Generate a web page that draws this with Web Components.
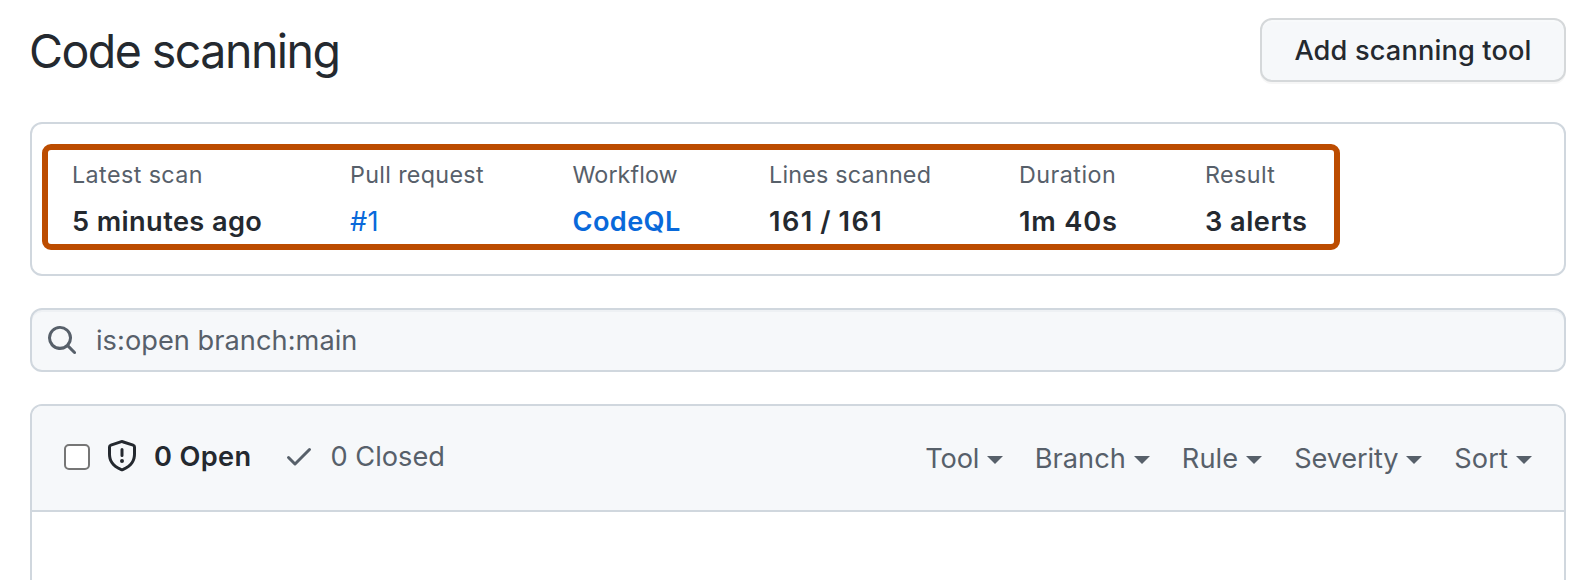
<!DOCTYPE html>
<html lang="en">
<head>
<meta charset="utf-8">
<title>Code scanning</title>
<style>
  html, body { margin: 0; height: 100%; background: #fff; overflow: hidden; }
  body { font-family: Inter, "Liberation Sans", sans-serif; color: #24292f; }
</style>
</head>
<body>
<scanning-page></scanning-page>

<script>
const define = (name, markup) => {
  const template = document.createElement('template');
  template.innerHTML = markup;
  customElements.define(name, class extends HTMLElement {
    constructor() {
      super();
      this.attachShadow({ mode: 'open' }).append(template.content.cloneNode(true));
    }
  });
};

define('octo-icon-search', `
  <style>:host { display: block; width: 32px; height: 32px; } svg { display: block; width: 100%; height: 100%; fill: currentColor; }</style>
  <svg viewBox="0 0 16 16" aria-hidden="true"><path d="M10.68 11.74a6 6 0 0 1-7.922-8.982 6 6 0 0 1 8.982 7.922l3.04 3.04a.749.749 0 0 1-.326 1.275.749.749 0 0 1-.734-.215ZM11.5 7a4.499 4.499 0 1 0-8.997 0A4.499 4.499 0 0 0 11.5 7Z"/></svg>`);

define('octo-icon-shield', `
  <style>:host { display: block; width: 32px; height: 32px; } svg { display: block; width: 100%; height: 100%; fill: currentColor; }</style>
  <svg viewBox="0 0 16 16" aria-hidden="true"><path d="M7.467.133a1.748 1.748 0 0 1 1.066 0l5.25 1.68A1.75 1.75 0 0 1 15 3.48V7c0 1.566-.32 3.182-1.303 4.682-.983 1.498-2.585 2.813-5.032 3.855a1.697 1.697 0 0 1-1.33 0c-2.447-1.042-4.049-2.357-5.032-3.855C1.32 10.182 1 8.566 1 7V3.48a1.755 1.755 0 0 1 1.217-1.667Zm.61 1.429a.25.25 0 0 0-.153 0l-5.25 1.68a.25.25 0 0 0-.174.238V7c0 1.358.275 2.666 1.057 3.86.784 1.194 2.121 2.34 4.366 3.297a.196.196 0 0 0 .154 0c2.245-.956 3.582-2.104 4.366-3.298C13.225 9.666 13.5 8.36 13.5 7V3.48a.251.251 0 0 0-.174-.237l-5.25-1.68ZM8.75 4.75v3a.75.75 0 0 1-1.5 0v-3a.75.75 0 0 1 1.5 0ZM9 10.5a1 1 0 1 1-2 0 1 1 0 0 1 2 0Z"/></svg>`);

define('octo-icon-check', `
  <style>:host { display: block; width: 32px; height: 32px; } svg { display: block; width: 100%; height: 100%; fill: currentColor; }</style>
  <svg viewBox="0 0 16 16" aria-hidden="true"><path d="M13.78 4.22a.75.75 0 0 1 0 1.06l-7.25 7.25a.75.75 0 0 1-1.06 0L2.22 9.28a.751.751 0 0 1 .018-1.042.751.751 0 0 1 1.042-.018L6 10.94l6.72-6.72a.75.75 0 0 1 1.06 0Z"/></svg>`);

define('tool-button', `
  <style>
    :host { display: block; }
    button {
      box-sizing: border-box; width: 306px; height: 64px; padding: 2px 0 0; display: flex; align-items: center; justify-content: center;
      font: 500 27.2px/40px Inter, "Liberation Sans", sans-serif; letter-spacing: .15px; color: #24292f;
      background: #f6f8fa; border: 2px solid #d5d8da; border-radius: 12px;
      box-shadow: 0 2px 0 rgba(27,31,36,.04), inset 0 2px 0 rgba(255,255,255,.25);
    }
  </style>
  <button type="button"><slot></slot></button>`);

define('scan-fact', `
  <style>
    :host { display: block; white-space: nowrap; --label-ls: 0; --value-ls: 0; --value-ws: 0; }
    .label { font-size: 23.3px; line-height: 36px; letter-spacing: var(--label-ls); color: #57606a; }
    .value { margin-top: 9px; font-size: 27.2px; line-height: 40px; font-weight: 600; letter-spacing: var(--value-ls); word-spacing: var(--value-ws); color: #24292f; }
    ::slotted(a) { color: #0969da; text-decoration: none; }
  </style>
  <div class="label"><slot name="label"></slot></div>
  <div class="value"><slot></slot></div>`);

define('scan-summary', `
  <style>
    :host { display: block; box-sizing: border-box; height: 154px; padding: 20px 10px; border: 2px solid #d0d7de; border-radius: 12px; }
    .highlight {
      box-sizing: border-box; width: 1298px; height: 106px; padding: 7px 0 0 24px;
      border: 6px solid #bc4c00; border-radius: 9px;
      display: grid; grid-template-columns: 278px 222.5px 196.5px 250px 186px auto; align-items: start;
    }
  </style>
  <div class="highlight"><slot></slot></div>`);

define('search-field', `
  <style>
    :host {
      display: flex; align-items: center; box-sizing: border-box; height: 64px; padding-left: 14px;
      border: 2px solid #d0d7de; border-radius: 12px; background: #f6f8fa; box-shadow: inset 0 2px 0 rgba(208,215,222,.2);
      color: #57606a; font-size: 27.2px; line-height: 40px; letter-spacing: .04px;
    }
    .query { margin-left: 18px; padding-top: 2px; }
  </style>
  <octo-icon-search></octo-icon-search><span class="query"><slot></slot></span>`);

define('filter-menu', `
  <style>
    :host { display: flex; align-items: center; font-size: 27.2px; line-height: 40px; white-space: nowrap; color: #57606a; }
    i { margin-left: 8px; margin-top: 2px; border: 8px solid transparent; border-top-color: currentColor; border-bottom: 0; }
  </style>
  <slot></slot><i></i>`);

define('alert-list', `
  <style>
    :host { display: block; box-sizing: border-box; height: 200px; border: 2px solid #d0d7de; border-radius: 12px 12px 0 0; overflow: hidden; }
    header {
      box-sizing: border-box; height: 106px; display: flex; align-items: flex-start; justify-content: space-between;
      padding: 30px 32px 0 32px; background: #f6f8fa; border-bottom: 2px solid #d0d7de;
    }
    .counts, .filters, .count { display: flex; align-items: center; white-space: nowrap; }
    .counts { height: 40px; font-size: 27.2px; line-height: 40px; color: #57606a; }
    .box { box-sizing: border-box; width: 26px; height: 26px; margin: 2px 16px 0 0; border: 2px solid #767676; border-radius: 5px; background: #fff; }
    .open { color: #24292f; font-weight: 600; letter-spacing: .356px; width: 177px; }
    .closed { letter-spacing: 0; }
    .count { height: 40px; }
    .count span { padding-top: 2px; }
    .open span { margin-left: 16px; }
    .closed span { margin-left: 15.5px; }
    .filters { padding-top: 3px; }
  </style>
  <header>
    <div class="counts">
      <div class="box" role="checkbox" aria-checked="false"></div>
      <div class="count open"><octo-icon-shield></octo-icon-shield><span>0 Open</span></div>
      <div class="count closed"><octo-icon-check></octo-icon-check><span>0 Closed</span></div>
    </div>
    <div class="filters"><slot></slot></div>
  </header>`);

define('scanning-page', `
  <style>
    :host { display: flex; flex-direction: column; gap: 32px; padding: 18px 22px 0 30px; }
    .top { display: flex; justify-content: space-between; height: 72px; }
    h1 { margin: 0 0 0 -1px; padding-top: 3px; font-size: 46.5px; font-weight: 400; line-height: 60px; letter-spacing: -1.53px; }
  </style>
  <div class="top"><h1>Code scanning</h1><tool-button>Add scanning tool</tool-button></div>
  <scan-summary>
    <scan-fact style="--label-ls:.42px;--value-ls:.389px"><span slot="label">Latest scan</span>5 minutes ago</scan-fact>
    <scan-fact style="--label-ls:.329px;--value-ls:.4px"><span slot="label">Pull request</span><a style="font-weight:400">#1</a></scan-fact>
    <scan-fact style="--label-ls:.08px;--value-ls:.371px"><span slot="label">Workflow</span><a>CodeQL</a></scan-fact>
    <scan-fact style="--label-ls:.22px;--value-ls:1.4px;--value-ws:-1.6px"><span slot="label">Lines scanned</span>161 / 161</scan-fact>
    <scan-fact style="--label-ls:.48px;--value-ls:.826px"><span slot="label">Duration</span>1m 40s</scan-fact>
    <scan-fact style="--label-ls:.4px;--value-ls:.485px"><span slot="label">Result</span>3 alerts</scan-fact>
  </scan-summary>
  <search-field>is:open branch:main</search-field>
  <alert-list>
    <filter-menu style="width:109.5px;letter-spacing:-.176px">Tool</filter-menu>
    <filter-menu style="width:147px;letter-spacing:0">Branch</filter-menu>
    <filter-menu style="width:112.5px;letter-spacing:.1px">Rule</filter-menu>
    <filter-menu style="width:160px;letter-spacing:-.147px">Severity</filter-menu>
    <filter-menu style="letter-spacing:.098px">Sort</filter-menu>
  </alert-list>`);
</script>
</body>
</html>
